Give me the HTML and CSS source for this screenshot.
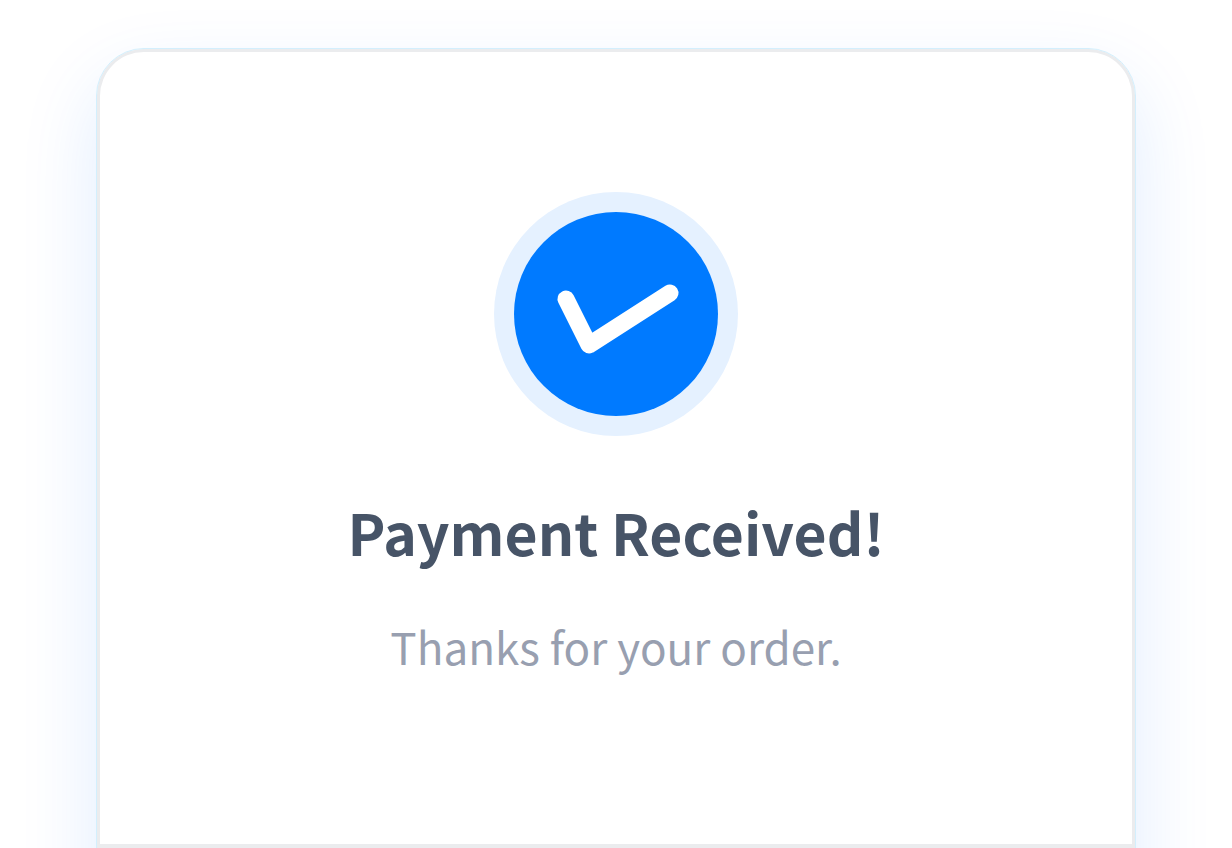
FILE: index.html
```html
<!DOCTYPE html>
<html lang="en">
<head>
    <meta charset="UTF-8">
    <meta name="viewport" content="width=device-width, initial-scale=1.0">
    <title>Payment Received</title>
    <link rel="stylesheet" href="styles.css">
</head>
<body>
    <main class="page">
        <div class="card">
            <section class="confirmation">
                <svg class="check-icon" viewBox="0 0 244 244" aria-hidden="true">
                    <circle class="check-ring" cx="122" cy="122" r="122"/>
                    <circle class="check-disc" cx="122" cy="122" r="102"/>
                    <path class="check-mark" d="M72 107L95 153L176 101"/>
                </svg>
                <h1>Payment Received!</h1>
                <p>Thanks for your order.</p>
            </section>
        </div>
    </main>
</body>
</html>
```

FILE: styles.css
```css
* {
    box-sizing: border-box;
}

body {
    margin: 0;
    background: #fff;
    font-family: "Noto Sans CJK SC", "Noto Sans", sans-serif;
}

.page {
    height: 100vh;
    padding: 48px 96px;
    overflow: hidden;
}

.card {
    padding-bottom: 240px;
    border: 1px solid #d3effd;
    border-radius: 48px;
    background: #fff;
    box-shadow: inset 0 0 0 3px #ebecee, 0 32px 80px rgba(0, 110, 255, .12);
}

/* top part of the card, closed off by a divider */
.confirmation {
    display: flex;
    flex-direction: column;
    align-items: center;
    padding: 143px 48px 166px;
    border-bottom: 4px solid #ebecee;
    text-align: center;
}

.check-icon {
    width: 244px;
    height: 244px;
}

.check-ring {
    fill: #e5f1ff;
}

.check-disc {
    fill: #007aff;
}

.check-mark {
    fill: none;
    stroke: #fff;
    stroke-width: 17px;
    stroke-linecap: round;
    stroke-linejoin: round;
}

h1 {
    margin: 53px 0 0;
    color: #475467;
    font-size: 57px;
    font-weight: bold;
    line-height: 84px;
}

p {
    margin: 41px 0 0;
    color: #989fb0;
    font-size: 44px;
    line-height: 64px;
}
```
